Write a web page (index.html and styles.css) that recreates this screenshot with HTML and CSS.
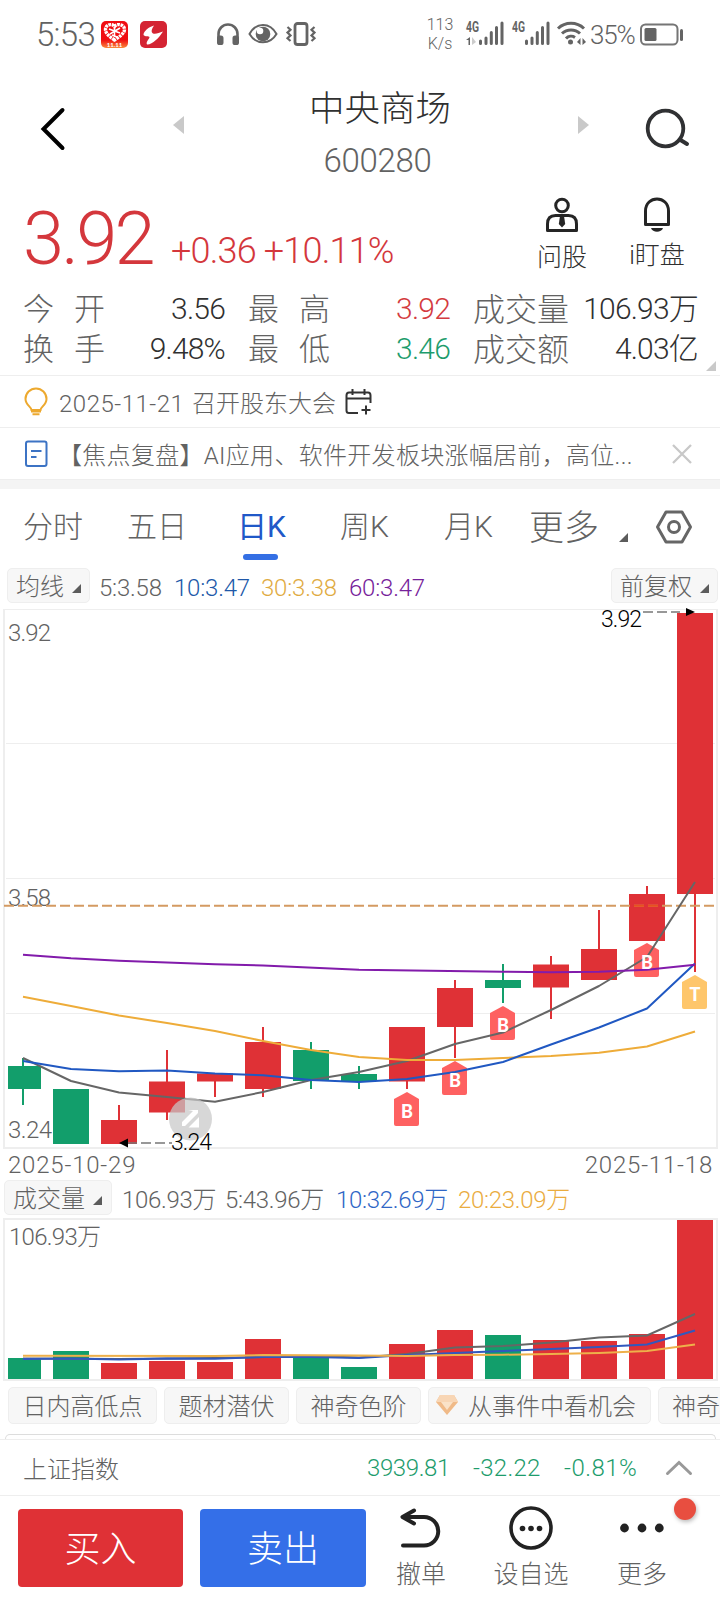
FILE: index.html
```html
<!DOCTYPE html>
<html lang="zh-CN">
<head>
<meta charset="utf-8">
<title>中央商场 600280</title>
<link rel="stylesheet" href="styles.css">
</head>
<body>
<div class="screen">
  <div class="status">
    <span class="clock">5:53</span>
    <svg class="app-a" width="27" height="27" viewBox="0 0 27 27"><defs><linearGradient id="fest" x1="0" y1="0" x2="0" y2="1"><stop offset=".7" stop-color="#f00d12"/><stop offset="1" stop-color="#fb8a3c"/></linearGradient></defs><rect width="27" height="27" rx="5" fill="url(#fest)"/><path d="M13.5 19C9 16 4.500 12.500 4.500 8.500C4.500 3.500 11 2 13.500 5.500C16 2 23.500 3.500 23.500 8.500C23.500 12.500 18 16 13.500 19Z" fill="none" stroke="#fff" stroke-width="3.400" stroke-dasharray="2.600 .7"/><path d="M8 8l11 4M19 7L9 13M11 14l5 2M13.500 7v9" stroke="#fff" stroke-width="1.500"/><text x="13.500" y="26" text-anchor="middle" class="fest-text">11.11</text></svg>
    <svg class="app-b" width="27" height="27" viewBox="0 0 27 27"><rect width="27" height="27" rx="5" fill="#d42433"/><path d="M14 4.500C9 6 3.500 10 3.500 14C5 16 9 15 9.500 16C9.500 18 5.500 21 7 23.500C12 24 19 17 23 10.500C19 12 15.500 13.500 13 12.500C10.500 11 12 7.500 14 4.500Z" fill="#fff"/></svg>
    <svg class="phones" width="24" height="24" viewBox="0 0 24 24"><path d="M2.500 17v-5a9.500 9.500 0 0 1 19 0v5" fill="none" stroke="#646464" stroke-width="2.600"/><rect x="1" y="13.500" width="6.500" height="9.500" rx="2.600" fill="#646464"/><rect x="16.500" y="13.500" width="6.500" height="9.500" rx="2.600" fill="#646464"/></svg>
    <svg class="eye" width="30" height="22" viewBox="0 0 30 22"><path d="M1.500 11C8 -1 22 -1 28.500 11C22 22 8 22 1.500 11Z" fill="none" stroke="#646464" stroke-width="2"/><circle cx="15" cy="11" r="7.300" fill="#646464"/><circle cx="12" cy="8" r="3.300" fill="#fff"/></svg>
    <svg class="vibe" width="30" height="24" viewBox="0 0 30 24"><rect x="9" y="1.500" width="12" height="21" rx="2.500" fill="none" stroke="#646464" stroke-width="2.800"/><path d="M1.500 5l3 2.800-3 2.800 3 2.800-3 2.800 3 2.800M28.500 5l-3 2.800 3 2.800-3 2.800 3 2.800-3 2.800" fill="none" stroke="#646464" stroke-width="2.200"/></svg>
    <span class="rate">113<br>K/s</span>
    <svg class="sig" width="38" height="25" viewBox="0 0 38 25"><text x="0" y="11" class="net" textLength="13" lengthAdjust="spacingAndGlyphs">4G</text><path d="M0 19l4-3v8H2.500v-5z" fill="#646464"/><path d="M6 16v8l4-3z" fill="#ccc"/><path d="M14.500 20v2.500M20 17v5.500M25.300 11.500v11M30.500 6.500v16M36 2v20.500" stroke="#646464" stroke-width="3" stroke-linecap="round"/></svg>
    <svg class="sig2" width="38" height="25" viewBox="0 0 38 25"><text x="0" y="11" class="net" textLength="13" lengthAdjust="spacingAndGlyphs">4G</text><path d="M14.500 20v2.500M20 17v5.500M25.300 11.500v11M30.500 6.500v16M36 2v20.500" stroke="#646464" stroke-width="3" stroke-linecap="round"/></svg>
    <svg class="wifi" width="29" height="25" viewBox="0 0 29 25"><path d="M1 7.500a19 19 0 0 1 26 0M5 12.500a13 13 0 0 1 18 0M9 17.500a7 7 0 0 1 9-1" fill="none" stroke="#646464" stroke-width="3"/><circle cx="13.500" cy="21" r="2.500" fill="#646464"/><path d="M20 21l3.500-4v7zM29 21l-3.500-4v7z" fill="#646464"/></svg>
    <span class="pct">35%</span>
    <svg class="batt" width="44" height="23" viewBox="0 0 44 23"><rect x="1" y="1.500" width="36.500" height="20" rx="4.500" fill="none" stroke="#757575" stroke-width="2"/><rect x="4.500" y="5" width="12" height="13" rx="1.500" fill="#646464"/><path d="M41.500 7.500v9" stroke="#646464" stroke-width="3" stroke-linecap="round"/></svg>
  </div>

  <div class="head">
    <svg class="back" width="26" height="44" viewBox="0 0 26 44"><path d="M22.500 3L3.500 22l19 19" fill="none" stroke="#000" stroke-width="4" stroke-linecap="round"/></svg>
    <svg class="prev" width="12" height="18" viewBox="0 0 12 18"><path d="M0 9L11 0v18z" fill="#c9c9c9"/></svg>
    <div class="title"><div class="name">中央商场</div><div class="code">600280</div></div>
    <svg class="next" width="12" height="18" viewBox="0 0 12 18"><path d="M11 9L0 0v18z" fill="#c9c9c9"/></svg>
    <svg class="search" width="46" height="42" viewBox="0 0 46 42"><circle cx="20.500" cy="20.500" r="17.800" fill="none" stroke="#303133" stroke-width="3.800"/><path d="M35.500 32l6.500 4" stroke="#303133" stroke-width="4" stroke-linecap="round"/></svg>
  </div>

  <div class="price">
    <span class="last">3.92</span><span class="chg">+0.36 +10.11%</span>
    <div class="tool ask"><svg width="36" height="36" viewBox="0 0 36 36"><circle cx="18" cy="8.500" r="6.300" fill="none" stroke="#252525" stroke-width="3"/><path d="M3.500 33.500V27c0-6 3-8.500 8-8.500h13c5 0 8 2.500 8 8.500v6.500z" fill="none" stroke="#252525" stroke-width="3" stroke-linejoin="round"/><path d="M16 19h4l1.200 8-3.200 3.500-3.200-3.500z" fill="#252525"/></svg><span>问股</span></div>
    <div class="tool watch"><svg width="36" height="36" viewBox="0 0 36 36"><path d="M6.500 27.500V14c0-16 23-16 23 0v13.500z" fill="none" stroke="#252525" stroke-width="3" stroke-linejoin="round"/><path d="M12 31h12c-1.500 5-10.500 5-12 0z" fill="#252525"/></svg><span>i盯盘</span></div>
  </div>

  <div class="quotes">
    <div class="q"><b class="lab"><i>今</i><i>开</i></b><span>3.56</span></div>
    <div class="q"><b class="lab"><i>最</i><i>高</i></b><span class="red">3.92</span></div>
    <div class="q"><b class="lab3">成交量</b><span>106.93万</span></div>
    <div class="q"><b class="lab"><i>换</i><i>手</i></b><span>9.48%</span></div>
    <div class="q"><b class="lab"><i>最</i><i>低</i></b><span class="green">3.46</span></div>
    <div class="q"><b class="lab3">成交额</b><span>4.03亿</span></div>
    <svg class="corner" width="10" height="10" viewBox="0 0 10 10"><path d="M10 0v10H0z" fill="#c9c9c9"/></svg>
  </div>

  <div class="note">
    <svg class="nicon" width="24" height="28" viewBox="0 0 24 28"><path d="M7.500 22c0-3-6-5-6-11a10.500 10.500 0 0 1 21 0c0 6-6 8-6 11z" fill="none" stroke="#eda92f" stroke-width="2"/><path d="M7 23.500h10M8.500 26.300h7" stroke="#eda92f" stroke-width="2"/></svg>
    <span class="event"><span class="day">2025-11-21</span>召开股东大会</span>
    <svg class="cal" width="27" height="26" viewBox="0 0 27 26"><path d="M13 24H4c-2 0-2.500-1-2.500-2.500v-15C1.500 4.500 2.500 3.500 4 3.500h19c2 0 2.500 1 2.500 3V14M1.500 9.500h24M7.500 0v6M19.500 0v6M21 16.500v9M16.500 21h9" fill="none" stroke="#333" stroke-width="2"/></svg>
  </div>
  <div class="note">
    <svg class="nicon" width="24" height="28" viewBox="0 0 24 28"><rect x="2" y="1.500" width="20.500" height="24.500" rx="2" fill="none" stroke="#3c73c4" stroke-width="2"/><path d="M7 11h10.500M7 17h5.500" stroke="#3c73c4" stroke-width="2"/></svg>
    <span class="news">【焦点复盘】AI应用、软件开发板块涨幅居前，高位...</span>
    <svg class="close" width="20" height="20" viewBox="0 0 20 20"><path d="M1 1l18 18M19 1L1 19" stroke="#c8c8c8" stroke-width="2.300"/></svg>
  </div>
  <div class="band"></div>

  <div class="tabs">
    <span class="tab t1">分时</span><span class="tab t2">五日</span><span class="tab t3">日K</span><span class="tab t4">周K</span><span class="tab t5">月K</span><span class="tab t6">更多</span>
    <svg class="tri" width="9" height="9" viewBox="0 0 9 9"><path d="M9 0v9H0z" fill="#5c5c5c"/></svg>
    <svg class="hex" width="38" height="34" viewBox="0 0 38 34"><path d="M11 2h16l8.500 15L27 32H11L2.500 17z" fill="none" stroke="#666" stroke-width="3" stroke-linejoin="round"/><circle cx="19" cy="17" r="5.500" fill="none" stroke="#666" stroke-width="3"/></svg>
  </div>

  <div class="legend">
    <span class="pill p1">均线<svg width="9" height="9" viewBox="0 0 9 9"><path d="M9 0v9H0z" fill="#5c5c5c"/></svg></span>
    <span class="m m1">5:3.58</span><span class="m m2">10:3.47</span><span class="m m3">30:3.38</span><span class="m m4">60:3.47</span>
    <span class="pill p2">前复权<svg width="9" height="9" viewBox="0 0 9 9"><path d="M9 0v9H0z" fill="#5c5c5c"/></svg></span>
  </div>

  <svg class="kline" width="720" height="544" viewBox="0 607 720 544">
    <g fill="none" stroke="#eee"><path d="M4 609.500H717M6 743.500H715M6 878.500H715M6 1013.500H715"/><path d="M4 609V1148H717V609" stroke-width="2"/></g>
    <g class="axis"><text x="8" y="641" textLength="43">3.92</text><text x="8" y="906" textLength="43">3.58</text></g>
    <g stroke-width="2">
      <g stroke="#129e6b" fill="#129e6b"><path d="M23 1058V1105M311 1042V1089M359 1066V1089M503 964V1003"/><path stroke="none" d="M8 1066h33v23H8zM53 1089h36v55H53zM293 1050h36v31h-36zM341 1074h36v7h-36zM485 980h36v8h-36z"/></g>
      <g stroke="#df3136" fill="#df3136"><path d="M119 1105V1140M167 1050V1120M215 1075V1097M263 1027V1097M407 1030V1089M455 980V1058M551 956V1019M599 910V970M647 886V930M695 620V972"/><path stroke="none" d="M101 1120h36v24h-36zM149 1081.500h36v31h-36zM197 1073.500h36v8h-36zM245 1042h36v47h-36zM389 1027h36v54.500h-36zM437 988h36v39h-36zM533 964.500h36v23h-36zM581 949h36v31h-36zM629 894h36v47h-36zM677 613h36v281h-36z"/></g>
    </g>
    <path d="M4 905.700H714" stroke="#d49a62" stroke-width="2" stroke-dasharray="10 4"/><path d="M634 905.700h10M648 905.700h10" stroke="#e8501f" stroke-width="2"/>
    <g stroke="none">
      <g fill="#fe6161"><path d="M394 1099l13-7 12 7v25q0 2-2 2h-21q-2 0-2-2z"/><path d="M442 1068l13-7 12 7v25q0 2-2 2h-21q-2 0-2-2z"/><path d="M490 1013l13-7 12 7v25q0 2-2 2h-21q-2 0-2-2z"/><path d="M634 950l13-7 12 7v25q0 2-2 2h-21q-2 0-2-2z"/></g>
      <path d="M682 982l13-7 12 7v25q0 2-2 2h-21q-2 0-2-2z" fill="#fec66b"/>
    </g>
    <g fill="none" stroke-width="2" stroke-linejoin="round">
      <path stroke="#666" d="M23 1058L71 1081L119 1092.500L167 1097L215 1101.700L263 1092L311 1080L359 1072L407 1061L455 1044L503 1032.500L551 1010L599 986L647 957L695 882"/>
      <path stroke="#eeac39" d="M23 996.700L71 1006L119 1015.500L167 1023L215 1031L263 1041L311 1050L359 1057L407 1060L455 1060L503 1058L551 1056L599 1052.700L647 1046.500L695 1031.500"/>
      <path stroke="#2058c2" d="M23 1061L71 1069L119 1071.300L167 1070.500L215 1073.500L263 1075.300L311 1080L359 1082L407 1079L455 1072L503 1062L551 1044.500L599 1027.500L647 1008.500L695 963.500"/>
      <path stroke="#821bab" d="M23 954.700L71 958.300L119 960.700L215 964.200L263 965.500L359 969.700L503 971.700L551 972.300L599 971.700L647 969.700L695 964.700"/>
    </g>
    <g class="mark"><text x="407" y="1118">B</text><text x="455" y="1087">B</text><text x="503" y="1032">B</text><text x="647" y="969">B</text><text x="695" y="1001">T</text></g>
    <circle cx="190.500" cy="1119" r="21.500" fill="#c8c8c8" fill-opacity=".72"/><path d="M188 1110h10v3L185 1126h-3v-4L193 1111zM199 1117v10.500h-10.500z" fill="#fff"/>
    <path d="M127 1143H172M643 612H680" stroke="#777" stroke-width="1.500" stroke-dasharray="10 4"/><path d="M119 1143l9-4.500v9zM695 612l-9-4v8z" fill="#000"/>
    <g class="axis"><text x="8" y="1138" textLength="44">3.24</text></g><g class="axis dark"><text x="171" y="1150" textLength="41">3.24</text><text x="601" y="627" textLength="41">3.92</text></g>
  </svg>
  <div class="dates"><span>2025-10-29</span><span>2025-11-18</span></div>

  <div class="legend vol">
    <span class="pill p3">成交量<svg width="9" height="9" viewBox="0 0 9 9"><path d="M9 0v9H0z" fill="#5c5c5c"/></svg></span>
    <span class="v v1">106.93万</span><span class="v v2">5:43.96万</span><span class="v v3">10:32.69万</span><span class="v v4">20:23.09万</span>
  </div>
  <svg class="volume" width="720" height="165" viewBox="0 1217 720 165">
    <path d="M4 1219H717V1380H4z" fill="none" stroke="#eee" stroke-width="2"/>
    <g class="axis"><text x="9" y="1245" textLength="92">106.93万</text></g>
    <path fill="#129e6b" d="M8 1358h33v21H8zM53 1351h36v28H53zM293 1358h36v21h-36zM341 1367h36v12h-36zM485 1335h36v44h-36z"/>
    <path fill="#df3136" d="M101 1363h36v16h-36zM149 1361h36v18h-36zM197 1362h36v17h-36zM245 1339h36v40h-36zM389 1344h36v35h-36zM437 1330h36v49h-36zM533 1340h36v39h-36zM581 1341h36v38h-36zM629 1334h36v45h-36zM677 1220h36v159h-36z"/>
    <g fill="none" stroke-width="2"><path stroke="#666" d="M23 1358.500L119 1359L215 1358L311 1356L359 1357.500L407 1354L455 1347.500L503 1346L551 1342.500L599 1337.500L647 1335.500L695 1314"/><path stroke="#3158be" d="M23 1359L71 1358.500L119 1359.500L167 1358.500L215 1358.700L263 1357L311 1357L359 1358L407 1355L455 1353L503 1351L551 1349L599 1347L647 1344.500L695 1330.500"/><path stroke="#eeb04a" d="M23 1355.700L215 1356L263 1355L359 1355.500L407 1356L455 1355L503 1354.700L551 1354L599 1353L647 1351L695 1344.500"/></g>
  </svg>

  <div class="chips">
    <span class="chip c1">日内高低点</span><span class="chip c2">题材潜伏</span><span class="chip c3">神奇色阶</span><span class="chip c4"><svg width="22" height="20" viewBox="0 0 22 20"><path d="M4 0h14l4 7-11 13L0 7z" fill="#f0ba88"/><path d="M4 0h14l4 7H0z" fill="#f8d6b5"/><path d="M5 7h12l-6 8z" fill="#fae2c8"/></svg>从事件中看机会</span><span class="chip c5">神奇</span>
  </div>
  <div class="peek"></div>

  <div class="index">
    <span class="iname">上证指数</span><span class="i1">3939.81</span><span class="i2">-32.22</span><span class="i3">-0.81%</span>
    <svg width="26" height="16" viewBox="0 0 26 16"><path d="M1.500 13.500L13 2.500l11.500 11" fill="none" stroke="#999" stroke-width="3" stroke-linecap="round"/></svg>
  </div>
  <div class="actions">
    <div class="btn buy">买入</div><div class="btn sell">卖出</div>
    <div class="act a1"><svg width="44" height="46" viewBox="0 0 44 46"><path d="M15 5.500L3.500 12L15 18.500M4 12h21a14.200 14.200 0 0 1 0 28.500H4" fill="none" stroke="#222" stroke-width="4" stroke-linecap="round" stroke-linejoin="round"/></svg><span>撤单</span></div>
    <div class="act a2"><svg width="46" height="46" viewBox="0 0 46 46"><circle cx="23" cy="23" r="20" fill="none" stroke="#222" stroke-width="3.600"/><g fill="#222"><circle cx="14.500" cy="23.500" r="2.800"/><circle cx="23" cy="23.500" r="2.800"/><circle cx="31.500" cy="23.500" r="2.800"/></g></svg><span>设自选</span></div>
    <div class="act a3"><svg width="46" height="46" viewBox="0 0 46 46"><g fill="#222"><circle cx="5.500" cy="23" r="4.400"/><circle cx="23" cy="23" r="4.400"/><circle cx="40.300" cy="23" r="4.400"/></g></svg><span>更多</span><i class="dot"></i></div>
  </div>
</div>
</body>
</html>
```
FILE: styles.css
```css
* { box-sizing: border-box; }
body { margin: 0; background: #fff; }
.screen { width: 720px; height: 1600px; overflow: hidden; background: #fff; color: #626262; font-family: Roboto, "Noto Sans CJK SC", sans-serif; font-weight: 300; white-space: nowrap; display: flex; flex-direction: column; }
.screen > * { flex: none; }
svg { display: block; flex: none; overflow: visible; }
i, b { font-style: normal; font-weight: 300; }
.red { color: #d43b40 !important; }
.green { color: #1d9c6c !important; }

.status { height: 70px; display: flex; align-items: flex-start; padding: 21px 0 0 36px; }
.clock { width: 65px; font-size: 33px; line-height: 28px; letter-spacing: -.7px; }
.fest-text { font: 700 6px Lato, sans-serif; fill: #fff; }
.app-b { margin-left: 12px; }
.phones { margin: 1px 0 0 49px; }
.eye { margin: 2px 0 0 8px; }
.vibe { margin: 1px 0 0 8px; }
.rate { width: 38px; margin: -6px 0 0 105px; font: 300 16px/19px Roboto, sans-serif; text-align: center; }
.net { font: 700 14px Roboto, sans-serif; fill: #646464; }
.sig { margin-left: 7px; }
.sig2 { margin-left: 8px; }
.wifi { margin-left: 7px; }
.pct { width: 49px; margin-left: 4px; font-size: 26px; line-height: 28px; letter-spacing: -1.2px; }
.batt { margin: 2px 0 0 1px; }

.head { height: 120px; display: flex; align-items: flex-start; padding-left: 40px; }
.back { margin-top: 37px; }
.prev { margin: 46px 0 0 107px; }
.title { width: 238px; margin-left: 76px; text-align: center; }
.name { font-size: 35.500px; line-height: 50px; padding-top: 14px; color: #303030; }
.code { font-size: 33px; line-height: 38px; letter-spacing: -.3px; margin: 8px 5px 0 0; }
.next { margin: 46px 0 0 79px; }
.search { margin: 38px 0 0 55px; }

.price { height: 96px; position: relative; display: flex; color: #d4373c; padding-left: 23px; }
.last { width: 148px; font-size: 74px; line-height: 98px; letter-spacing: -2.8px; }
.chg { width: 366px; font-size: 36px; line-height: 123px; letter-spacing: -.8px; }
.tool { display: flex; flex-direction: column; align-items: center; color: #303030; font-size: 25px; line-height: 34px; padding-top: 7px; width: 50px; }
.tool span { margin-top: 8px; }
.watch { margin-left: 41px; width: 58px; }
.watch span { margin-top: 6px; }

.quotes { height: 90px; position: relative; display: grid; grid-template-columns: 202px 202px 225px; column-gap: 23px; grid-template-rows: 40px 40px; padding: 4px 0 0 23px; border-bottom: 1px solid #eee; }
.q { display: flex; justify-content: space-between; line-height: 40px; font-size: 30px; }
.q span { color: #303030; letter-spacing: -.8px; line-height: 38px; }
.lab { width: 82px; font-size: 31px; display: flex; justify-content: space-between; }
.lab3 { font-size: 32px; }
.corner { position: absolute; left: 706px; top: 75px; }

.note { height: 52px; display: flex; align-items: center; border-bottom: 1px solid #eee; padding-left: 24px; font-size: 24px; }
.event { width: 277px; margin-left: 11px; display: flex; align-items: baseline; }
.day { width: 134px; letter-spacing: .5px; }
.cal { margin-left: 9px; }
.news { width: 590px; margin-left: 10px; letter-spacing: .3px; }
.close { margin-left: 24px; }
.band { height: 9px; background: #f4f4f4; }

.tabs { height: 77px; display: flex; align-items: flex-start; font-size: 30px; line-height: 76px; padding-left: 23px; }
.t1 { width: 104px; }
.t2 { width: 110px; }
.t3 { width: 103px; color: #2058c8; font-weight: 400; position: relative; }
.t3::after { content: ""; position: absolute; left: 6px; top: 65px; width: 35px; height: 6px; border-radius: 3px; background: #346fe4; }
.t4 { width: 104px; }
.t5 { width: 85px; }
.t6 { font-size: 35px; width: 90px; line-height: 80px; }
.tri { margin-top: 44px; }
.hex { margin: 21px 0 0 27px; }

.legend { height: 41px; padding: 2px 0 0 7px; display: flex; font-size: 24px; line-height: 34px; }
.pill { height: 35px; border: 1px solid #eee; border-radius: 5px; background: #f7f7f7; display: flex; justify-content: space-between; padding: 0 8px 0 8px; line-height: 36px; }
.pill svg { margin-top: 15px; }
.p1 { width: 83px; margin-right: 9px; }
.p2 { width: 107px; margin-left: auto; margin-right: 2px; }
.p3 { width: 108px; margin-right: 10px; padding-right: 9px; }
.m { letter-spacing: -.2px; line-height: 40px; }
.m1 { width: 75px; }
.m2 { width: 87px; color: #2058a8; }
.m3 { width: 88px; color: #dfab42; }
.m4 { width: 80px; color: #76219a; }
.kline { height: 544px; }
.axis text { font: 300 24px Roboto, "Noto Sans CJK SC", sans-serif; fill: #626262; }
.axis.dark text { fill: #000; font-size: 23px; }
.mark text { font: 900 18px Lato, sans-serif; fill: #fff; text-anchor: middle; }
.dates { height: 28px; display: flex; justify-content: space-between; padding: 0 7px 0 8px; font-size: 24px; line-height: 29px; letter-spacing: .8px; }
.vol { height: 38px; padding: 1px 0 0 4px; }
.v { letter-spacing: -.3px; line-height: 40px; }
.v1 { width: 103px; }
.v2 { width: 111px; }
.v3 { width: 122px; color: #2f66c6; }
.v4 { color: #eaac3f; }

.chips { height: 50px; padding: 5px 0 0 8px; display: flex; gap: 7px; font-size: 24px; }
.chip { flex: none; height: 37px; line-height: 35px; padding-top: 3px; border: 1px solid #eee; border-radius: 5px; background: #f7f7f7; display: flex; justify-content: center; align-items: center; gap: 10px; }
.c1 { width: 149px; }
.c2 { width: 125px; }
.c3 { width: 125px; }
.c4 { width: 223px; padding-right: 7px; }
.c4 svg { margin-top: -5px; }
.c5 { width: 125px; justify-content: flex-start; padding-left: 13px; }
.peek { height: 5px; margin: 2px 4px 0 5px; border: 1px solid #ddd; border-bottom: 0; border-radius: 5px 5px 0 0; }
.index { height: 57px; border-top: 1px solid #eee; border-bottom: 1px solid #eee; display: flex; align-items: center; padding-left: 23px; font-size: 24px; color: #1d9c6c; }
.iname { width: 344px; color: #626262; }
.i1 { width: 106px; letter-spacing: -.4px; }
.i2 { width: 91px; letter-spacing: .3px; }
.i3 { width: 102px; letter-spacing: .5px; }

.actions { height: 104px; display: flex; padding: 13px 0 0 18px; }
.btn { width: 165px; height: 78px; border-radius: 4px; color: #fff; font-size: 36px; line-height: 82px; text-align: center; background: #df3136; }
.sell { background: #346fe8; margin-left: 17px; width: 166px; }
.act { position: relative; display: flex; flex-direction: column; align-items: center; font-size: 25px; line-height: 34px; margin-top: -4px; }
.act span { margin-top: 7px; }
.a1 { width: 52px; margin-left: 29px; }
.a2 { width: 78px; margin-left: 45px; }
.a3 { width: 52px; margin-left: 46px; }
.dot { position: absolute; left: 58px; top: -7px; width: 22px; height: 22px; border-radius: 50%; background: #e84e40; box-shadow: 1px 2px 4px #bbb; }
```
